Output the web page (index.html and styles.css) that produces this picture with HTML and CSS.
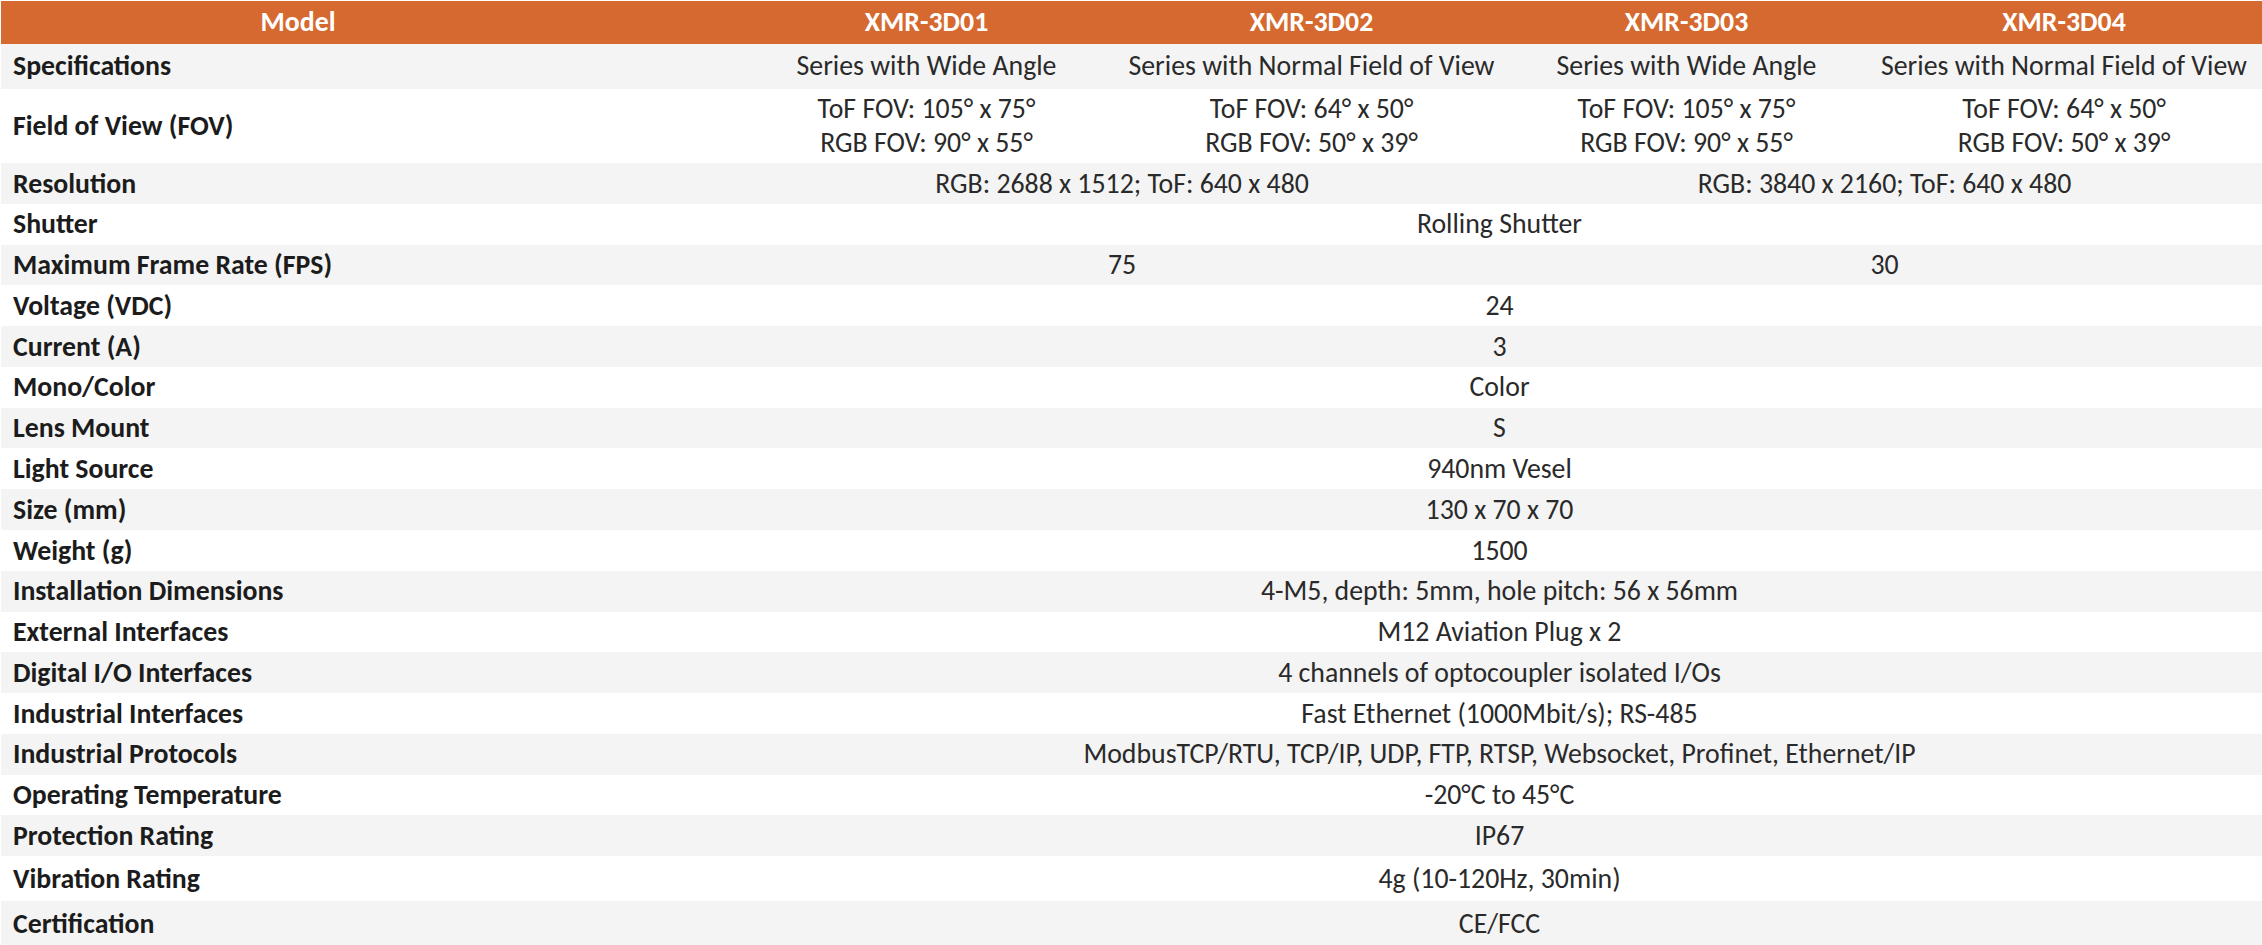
FILE: index.html
```html
<!DOCTYPE html>
<html lang="en">
<head>
<meta charset="utf-8">
<title>XMR-3D Specifications</title>
<link rel="stylesheet" href="styles.css">
</head>
<body>
<div class="wrap">
<table class="spec">
  <colgroup>
    <col class="c-label">
    <col class="c-1">
    <col class="c-2">
    <col class="c-3">
    <col class="c-4">
  </colgroup>
  <thead>
    <tr>
      <th class="th-model">Model</th>
      <th>XMR-3D01</th>
      <th>XMR-3D02</th>
      <th>XMR-3D03</th>
      <th>XMR-3D04</th>
    </tr>
  </thead>
  <tbody>
    <tr class="tall"><td class="lbl">Specifications</td><td>Series with Wide Angle</td><td>Series with Normal Field of View</td><td>Series with Wide Angle</td><td>Series with Normal Field of View</td></tr>
    <tr><td class="lbl">Field of View (FOV)</td><td>ToF FOV: 105° x 75°<br>RGB FOV: 90° x 55°</td><td>ToF FOV: 64° x 50°<br>RGB FOV: 50° x 39°</td><td>ToF FOV: 105° x 75°<br>RGB FOV: 90° x 55°</td><td>ToF FOV: 64° x 50°<br>RGB FOV: 50° x 39°</td></tr>
    <tr><td class="lbl">Resolution</td><td colspan="2">RGB: 2688 x 1512; ToF: 640 x 480</td><td colspan="2">RGB: 3840 x 2160; ToF: 640 x 480</td></tr>
    <tr><td class="lbl">Shutter</td><td colspan="4">Rolling Shutter</td></tr>
    <tr><td class="lbl">Maximum Frame Rate (FPS)</td><td colspan="2">75</td><td colspan="2">30</td></tr>
    <tr><td class="lbl">Voltage (VDC)</td><td colspan="4">24</td></tr>
    <tr><td class="lbl">Current (A)</td><td colspan="4">3</td></tr>
    <tr><td class="lbl">Mono/Color</td><td colspan="4">Color</td></tr>
    <tr><td class="lbl">Lens Mount</td><td colspan="4">S</td></tr>
    <tr><td class="lbl">Light Source</td><td colspan="4">940nm Vesel</td></tr>
    <tr><td class="lbl">Size (mm)</td><td colspan="4">130 x 70 x 70</td></tr>
    <tr><td class="lbl">Weight (g)</td><td colspan="4">1500</td></tr>
    <tr><td class="lbl">Installation Dimensions</td><td colspan="4">4-M5, depth: 5mm, hole pitch: 56 x 56mm</td></tr>
    <tr><td class="lbl">External Interfaces</td><td colspan="4">M12 Aviation Plug x 2</td></tr>
    <tr><td class="lbl">Digital I/O Interfaces</td><td colspan="4">4 channels of optocoupler isolated I/Os</td></tr>
    <tr><td class="lbl">Industrial Interfaces</td><td colspan="4">Fast Ethernet (1000Mbit/s); RS-485</td></tr>
    <tr><td class="lbl">Industrial Protocols</td><td colspan="4">ModbusTCP/RTU, TCP/IP, UDP, FTP, RTSP, Websocket, Profinet, Ethernet/IP</td></tr>
    <tr><td class="lbl">Operating Temperature</td><td colspan="4">-20°C to 45°C</td></tr>
    <tr><td class="lbl">Protection Rating</td><td colspan="4">IP67</td></tr>
    <tr class="tall"><td class="lbl">Vibration Rating</td><td colspan="4">4g (10-120Hz, 30min)</td></tr>
    <tr class="tall"><td class="lbl">Certification</td><td colspan="4">CE/FCC</td></tr>
  </tbody>
</table>
</div>
</body>
</html>
```

FILE: styles.css
```css
html, body {
  margin: 0;
  padding: 0;
  background: #ffffff;
}

.wrap {
  padding: 1px 0 0 1px;
}

.spec {
  width: 2261px;
  table-layout: fixed;
  border-collapse: collapse;
  font-family: "Carlito", "Lato", "Open Sans", sans-serif;
  font-size: 27.8px;
  line-height: 33.6px;
  color: #2a2a2a;
}

.c-label { width: 736px; }
.c-1 { width: 379px; }
.c-2 { width: 391px; }
.c-3 { width: 359px; }
.c-4 { width: 396px; }

.spec th {
  background: #d6692f;
  color: #ffffff;
  font-weight: 700;
  text-align: center;
  padding: 4px 0 5px;
  white-space: nowrap;
}

.spec th.th-model {
  padding-right: 142px;
}

.spec td {
  padding: 3.6px 0;
  text-align: center;
  vertical-align: middle;
  white-space: nowrap;
}

.spec td.lbl {
  text-align: left;
  padding-left: 12px;
  font-weight: 700;
  color: #1c1c1c;
}

.spec tbody tr:nth-child(odd) {
  background: #f4f4f4;
}

.spec tbody tr.tall td {
  padding-top: 5.7px;
  padding-bottom: 5.7px;
}
```
